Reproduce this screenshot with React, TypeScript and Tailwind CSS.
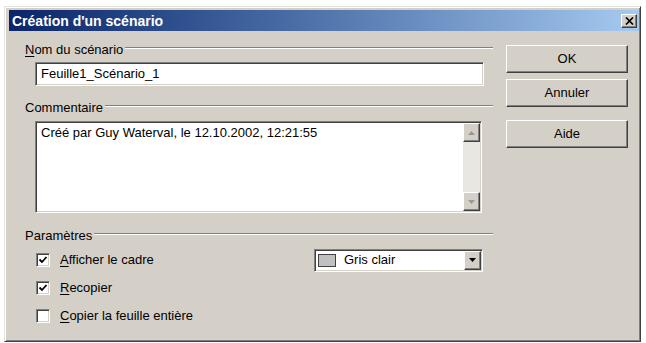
import React from "react";

const sunken =
  "border-t border-l border-t-[#808080] border-l-[#808080] border-b border-r border-b-white border-r-white shadow-[inset_1px_1px_0_#404040,inset_-1px_-1px_0_#d4d0c8]";
const raised =
  "border-t border-l border-t-white border-l-white border-b border-r border-b-[#404040] border-r-[#404040] shadow-[inset_-1px_-1px_0_#808080]";

function GroupLabel({ children }: { children: React.ReactNode }) {
  return (
    <div className="flex h-[15px] leading-[15px]">
      <span className="pr-[2px]">{children}</span>
      <div className="flex-1 mt-[5px] h-[2px] border-t border-t-[#808080] border-b border-b-white" />
    </div>
  );
}

function Check({ checked, children }: { checked?: boolean; children: React.ReactNode }) {
  return (
    <div className="flex items-center h-[28px]">
      <div className={`ml-[11px] w-[14px] h-[14px] bg-white ${sunken} flex items-center justify-center`}>
        {checked && (
          <svg width="10" height="10" viewBox="0 0 10 10">
            <path d="M1.5 4.5 L4 7 L8.5 2" fill="none" stroke="#000" strokeWidth="1.8" />
          </svg>
        )}
      </div>
      <span className="ml-[10px]">{children}</span>
    </div>
  );
}

function Btn({ children, className = "" }: { children: React.ReactNode; className?: string }) {
  return (
    <button className={`w-[122px] h-[28px] bg-[#d4d0c8] ${raised} flex items-center justify-center ${className}`}>
      {children}
    </button>
  );
}

function ScrollArrow({ down }: { down?: boolean }) {
  return (
    <div className={`w-[17px] h-[19px] bg-[#d4d0c8] ${raised} flex items-center justify-center`}>
      <svg width="7" height="4" viewBox="0 0 7 4">
        <path d={down ? "M0 0 H7 L3.5 4 Z" : "M0 4 H7 L3.5 0 Z"} fill="#9a9890" />
      </svg>
    </div>
  );
}

export default function App() {
  return (
    <div
      className="w-[646px] h-[343px] bg-white overflow-hidden text-[13px] text-black"
      style={{ fontFamily: '"Liberation Sans", Arial, sans-serif' }}
    >
      <div className="ml-[4px] mt-[6px] w-[637px] h-[336px] bg-[#d4d0c8] border-t border-l border-t-[#e4e2dc] border-l-[#e4e2dc] border-b border-r border-b-[#404040] border-r-[#404040] shadow-[inset_1px_1px_0_#ffffff,inset_-1px_-1px_0_#808080]">
        {/* title bar */}
        <div className="ml-[4px] mr-[1px] mt-[3px] h-[21px] bg-gradient-to-r from-[#0a246a] to-[#a6caf0] flex items-center">
          <span className="pl-[3px] text-white font-bold text-[14px] leading-none">Création d'un scénario</span>
          <div className={`ml-auto mr-[2px] w-[16px] h-[14px] bg-[#d4d0c8] ${raised} flex items-center justify-center`}>
            <svg width="9" height="8" viewBox="0 0 9 8">
              <path d="M1 0.5 L8 7.5 M8 0.5 L1 7.5" stroke="#000" strokeWidth="1.7" />
            </svg>
          </div>
        </div>

        <div className="flex items-start">
          {/* left column */}
          <div className="ml-[20px] w-[468px]">
            <div className="mt-[11px]">
              <GroupLabel>
                <u className="underline-offset-2">N</u>om du scénario
              </GroupLabel>
            </div>
            <div className={`mt-[5px] ml-[10px] w-[449px] h-[24px] bg-white ${sunken} flex items-center pl-[5px]`}>
              Feuille1_Scénario_1
            </div>

            <div className="mt-[14px]">
              <GroupLabel>Commentaire</GroupLabel>
            </div>
            <div className={`mt-[6px] ml-[10px] w-[447px] h-[92px] bg-white ${sunken} flex`}>
              <div className="flex-1 pl-[5px] pt-[3px] leading-[15px]">
                Créé par Guy Waterval, le 12.10.2002, 12:21:55
              </div>
              <div className="mt-[1px] mb-[1px] mr-[1px] w-[17px] flex flex-col bg-[#e9e7e1]">
                <ScrollArrow />
                <div className="flex-1" />
                <ScrollArrow down />
              </div>
            </div>

            <div className="mt-[15px]">
              <GroupLabel>Paramètres</GroupLabel>
            </div>
            <div className="mt-[3px]">
              <div className="flex items-center">
                <Check checked>
                  <u className="underline-offset-2">A</u>fficher le cadre
                </Check>
                <div className={`ml-auto mr-[10px] w-[169px] h-[23px] bg-white ${sunken} flex items-center`}>
                  <div className="ml-[3px] w-[18px] h-[13px] bg-[#c0c0c0] border border-[#404040]" />
                  <span className="ml-[8px]">Gris clair</span>
                  <div className={`ml-auto mr-[1px] w-[17px] h-[19px] bg-[#d4d0c8] ${raised} flex items-center justify-center`}>
                    <svg width="7" height="4" viewBox="0 0 7 4">
                      <path d="M0 0 H7 L3.5 4 Z" fill="#000" />
                    </svg>
                  </div>
                </div>
              </div>
              <Check checked>
                <u className="underline-offset-2">R</u>ecopier
              </Check>
              <Check>
                <u className="underline-offset-2">C</u>opier la feuille entière
              </Check>
            </div>
          </div>

          {/* buttons */}
          <div className="ml-[13px] mt-[14px] flex flex-col">
            <Btn>OK</Btn>
            <Btn className="mt-[6px]">Annuler</Btn>
            <Btn className="mt-[13px]">Aide</Btn>
          </div>
        </div>
      </div>
    </div>
  );
}
